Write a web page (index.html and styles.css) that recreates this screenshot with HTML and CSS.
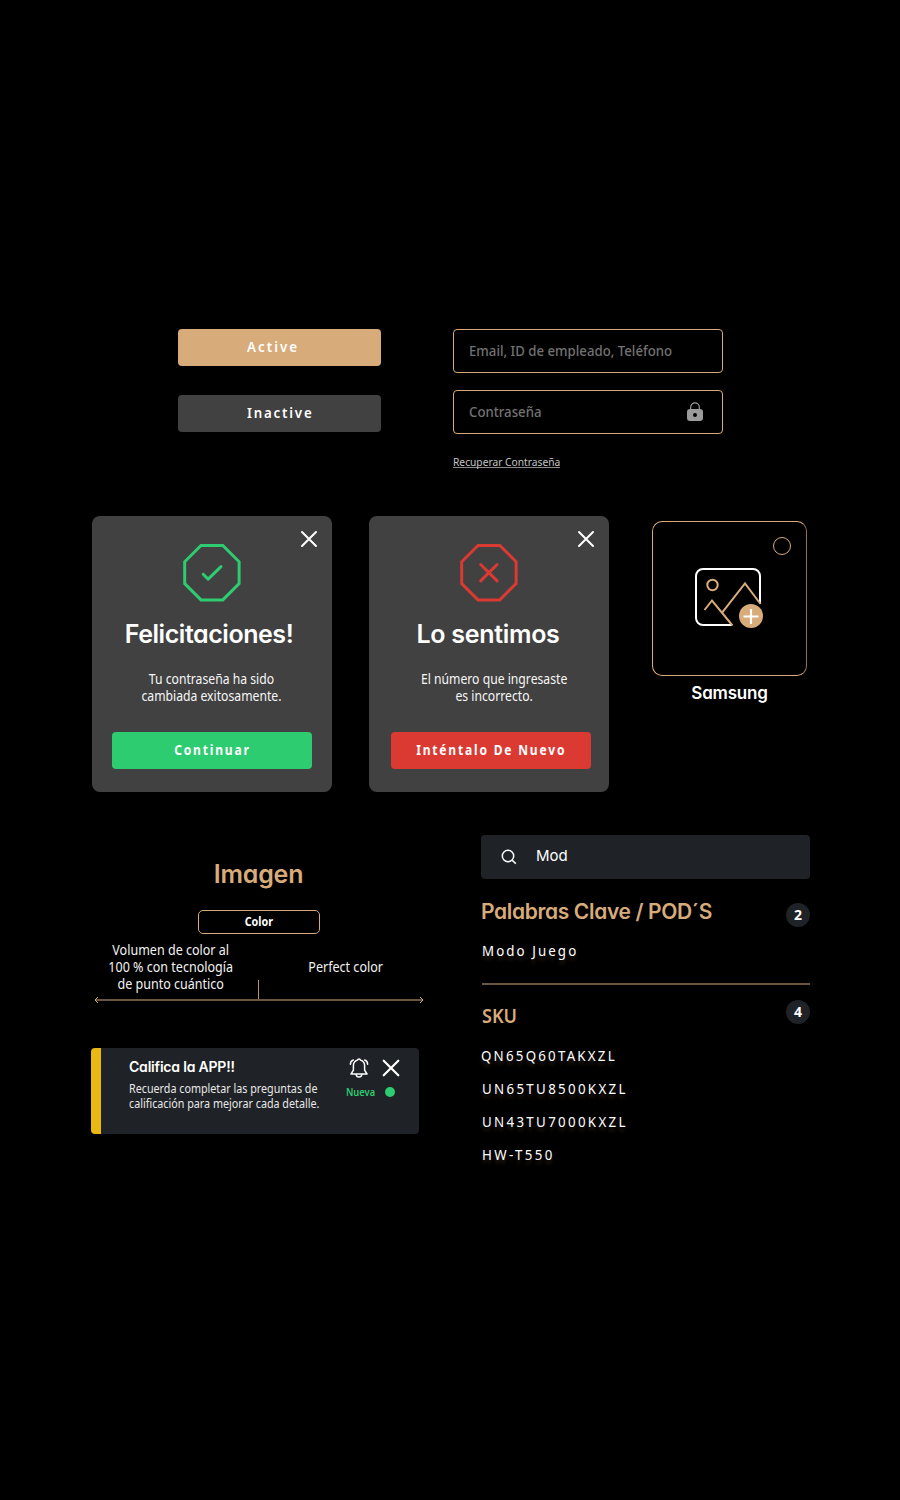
FILE: index.html
```html
<!DOCTYPE html>
<html lang="es">
<head>
<meta charset="utf-8">
<title>Componentes</title>
<link rel="stylesheet" href="styles.css">
</head>
<body>
<main class="page">
  <section class="controls">
    <div class="buttons">
      <button class="btn btn-active"><span class="txt">Active</span></button>
      <button class="btn btn-inactive"><span class="txt">Inactive</span></button>
    </div>
    <form class="form">
      <div class="field"><span class="txt">Email, ID de empleado, Teléfono</span></div>
      <div class="field">
        <span class="txt">Contraseña</span>
        <svg class="lock" width="16" height="20" viewBox="0 0 16 20">
          <path d="M3.7 8V5.2a4.3 4.3 0 0 1 8.6 0V8" fill="none" stroke="#9b9b9b" stroke-width="1.2"/>
          <path fill-rule="evenodd" fill="#9b9b9b" d="M3 7h10a3 3 0 0 1 3 3v6a3 3 0 0 1-3 3H3a3 3 0 0 1-3-3v-6a3 3 0 0 1 3-3zM8 11a2 2 0 1 0 0 4 2 2 0 0 0 0-4z"/>
        </svg>
      </div>
      <a class="link"><span class="txt">Recuperar Contraseña</span></a>
    </form>
  </section>

  <section class="cards">
    <article class="modal modal-ok">
      <svg class="close" width="18" height="18" viewBox="0 0 18 18"><path d="M2 2l14 14M16 2L2 16"/></svg>
      <svg class="octagon" width="58" height="58" viewBox="-0.2 0 58.6 58.6">
        <path d="M18 1.5h22L56.500 18v22L40 56.500H18L1.500 40V18z"/>
        <path class="mark" d="M20.200 30.500l5 5L38.200 22.900"/>
      </svg>
      <h2 class="title">Felicitaciones!</h2>
      <p class="message"><span class="txt">Tu contraseña ha sido<br>cambiada exitosamente.</span></p>
      <button class="action"><span class="txt">Continuar</span></button>
    </article>
    <article class="modal modal-error">
      <svg class="close" width="18" height="18" viewBox="0 0 18 18"><path d="M2 2l14 14M16 2L2 16"/></svg>
      <svg class="octagon" width="58" height="58" viewBox="-0.2 0 58.6 58.6">
        <path d="M18 1.500h22L56.500 18v22L40 56.500H18L1.500 40V18z"/>
        <path class="mark" d="M20.700 20.700l16.600 16.600M37.300 20.700L20.700 37.300"/>
      </svg>
      <h2 class="title">Lo sentimos</h2>
      <p class="message"><span class="txt">El número que ingresaste<br>es incorrecto.</span></p>
      <button class="action"><span class="txt">Inténtalo De Nuevo</span></button>
    </article>
    <figure class="gallery">
      <div class="tile">
        <span class="radio"></span>
        <svg class="picture" width="70" height="62" viewBox="0 0 70 62" fill="none">
          <path d="M38 57H9a7 7 0 0 1-7-7V8a7 7 0 0 1 7-7h50a7 7 0 0 1 7 7v27.500" stroke="#fff" stroke-width="2"/>
          <g stroke="#d8ab7b" stroke-width="2">
            <circle cx="18.500" cy="17" r="5.200"/>
            <path d="M10.500 42l7.500-9.500L38.500 57.500M28.500 44.200L51 15.500 66.500 36"/>
          </g>
          <circle cx="57" cy="48" r="12" fill="#d8ab7b"/>
          <path d="M49.500 48.500h15M57 41v15" stroke="#fff" stroke-width="2.200"/>
        </svg>
      </div>
      <figcaption class="caption">Samsung</figcaption>
    </figure>
  </section>

  <section class="lower">
    <div class="left">
      <div class="feature">
        <h2 class="feature-title">Imagen</h2>
        <div class="chip"><span class="txt">Color</span></div>
        <div class="compare">
          <p><span class="txt">Volumen de color al<br>100 % con tecnología<br>de punto cuántico</span></p>
          <p><span class="txt">Perfect color</span></p>
        </div>
        <svg class="axis" width="330" height="26" viewBox="0 0 330 26" fill="none" stroke="#d8ab7b">
          <path d="M164.500 0v20" stroke="#b8926a"/>
          <path d="M1 20h328" stroke-width="2" stroke="#6c563e"/>
          <path d="M4 17L1 20l3 3M326 17l3 3-3 3"/>
        </svg>
      </div>
      <article class="notice">
        <div class="notice-body">
          <h3 class="notice-title">Califica la APP!!</h3>
          <p class="notice-text"><span class="txt">Recuerda completar las preguntas de<br>calificación para mejorar cada detalle.</span></p>
        </div>
        <div class="notice-side">
          <div class="notice-icons">
            <svg width="20" height="20" viewBox="0 0 20 20" fill="none" stroke="#fff" stroke-width="1.500" stroke-linejoin="round" stroke-linecap="round">
              <path d="M10 1c.8 0 1.300.5 1.500 1.100 2.600.7 4.100 2.700 4.100 5.500v4.600l2.400 3.800H2l2.400-3.800V7.600c0-2.800 1.500-4.800 4.100-5.500C8.700 1.500 9.200 1 10 1z"/>
              <path d="M7.200 16.500c.2 1.700 1.300 2.600 2.800 2.600s2.600-.9 2.800-2.600M1.400 6.300c0-2.300 1.100-3.800 2.900-4.300M18.600 6.300c0-2.300-1.100-3.800-2.900-4.300"/>
            </svg>
            <svg class="dismiss" width="18" height="18" viewBox="0 0 18 18"><path d="M1.700 1.700l14.600 14.600M16.300 1.700L1.700 16.300"/></svg>
          </div>
          <div class="status"><span class="txt">Nueva</span><i class="dot"></i></div>
        </div>
      </article>
    </div>

    <div class="right">
      <div class="search">
        <svg width="18" height="18" viewBox="0 0 18 18" fill="none" stroke="#fff" stroke-width="1.500"><circle cx="8" cy="8" r="5.700"/><path d="M12.200 12.200l3.600 3.400"/></svg>
        <span class="query">Mod</span>
      </div>
      <div class="group">
        <h3 class="group-title">Palabras Clave / POD´S</h3>
        <span class="count">2</span>
      </div>
      <ul class="list">
        <li class="word"><span class="txt">Modo Juego</span></li>
      </ul>
      <hr class="rule">
      <div class="group group-sku">
        <h3 class="sku-title"><span class="txt">SKU</span></h3>
        <span class="count">4</span>
      </div>
      <ul class="list list-sku">
        <li class="first"><span class="txt">QN65Q60TAKXZL</span></li>
        <li><span class="txt">UN65TU8500KXZL</span></li>
        <li><span class="txt">UN43TU7000KXZL</span></li>
        <li class="last"><span class="txt">HW-T550</span></li>
      </ul>
    </div>
  </section>
</main>
</body>
</html>
```
FILE: styles.css
```css
* { box-sizing: border-box; margin: 0; padding: 0; }

body {
  background: #000;
  color: #fff;
  font-family: "Noto Sans", "Open Sans", sans-serif;
  font-size: 14px;
  line-height: 17px;
}

button { border: 0; font: inherit; color: inherit; }
ul { list-style: none; }

.page {
  width: 900px;
  height: 1500px;
  padding-top: 329px;
  overflow: hidden;
}

/* Condensed text run */
.txt {
  display: inline-block;
  white-space: nowrap;
  transform: scaleX(0.9);
  transform-origin: left center;
}

/* Buttons and fields */
.controls { display: flex; gap: 72px; height: 187px; padding-left: 178px; }
.buttons { display: flex; flex-direction: column; gap: 29px; width: 203px; }
.btn {
  height: 37px;
  padding: 0 0 2px 69px;
  border-radius: 4px;
  font-weight: 600;
  text-align: left;
}
.btn .txt { transform: scaleX(0.95); }
.btn-active { background: #d8ab7b; letter-spacing: 2.15px; }
.btn-inactive { background: #414141; letter-spacing: 1.9px; }

.form { display: flex; flex-direction: column; gap: 17px; width: 270px; }
.field {
  display: flex;
  align-items: center;
  justify-content: space-between;
  height: 44px;
  padding: 0 19px 0 15px;
  border: 1px solid #d8ab7b;
  border-radius: 4px;
  color: #727272;
  font-weight: 500;
}
.field .txt { margin-bottom: 2px; transform: scaleX(0.943); }
.lock { display: block; }
.link { margin-top: 2px; font-size: 11px; color: #c4c4c4; }
.link .txt {
  line-height: 11px;
  border-bottom: 1px solid #8a8a8a;
  transform: scaleX(0.93);
}

/* Modals */
.cards { display: flex; height: 319px; padding-left: 92px; }
.modal {
  position: relative;
  display: flex;
  flex-direction: column;
  align-items: center;
  width: 240px;
  height: 276px;
  margin-right: 37px;
  padding-top: 28px;
  border-radius: 8px;
  background: #414141;
}
.modal-ok { --tone: #2ecc71; }
.modal-error { --tone: #da3a32; margin-right: 43px; }
.close { position: absolute; top: 14px; right: 14px; stroke: #fff; stroke-width: 2; stroke-linecap: round; }
.octagon { fill: none; stroke: var(--tone); stroke-width: 3; }
.mark { stroke-linecap: round; stroke-linejoin: round; }
.title {
  margin-top: 17px;
  font: 600 25px/30px Inter, sans-serif;
  font-feature-settings: "cv11";
  white-space: nowrap;
}
.modal-ok .title { margin-right: 6px; letter-spacing: -0.45px; }
.modal-error .title { margin-right: 2px; letter-spacing: -0.3px; }
.message { margin-top: 21px; height: 34px; text-align: center; color: #f7f7f7; }
.message .txt { transform: scaleX(0.87); transform-origin: center; }
.modal-ok .message { margin-right: 1px; }
.modal-error .message { margin-left: 10px; }
.action {
  width: 200px;
  height: 37px;
  margin-top: 28px;
  padding-bottom: 2px;
  border-radius: 4px;
  background: var(--tone);
  font-weight: 700;
  letter-spacing: 2.1px;
  text-align: center;
}
.modal-error .action { margin-left: 4px; }
.action .txt { transform: scaleX(0.86); transform-origin: center; }

/* Gallery tile */
.gallery { width: 155px; padding-top: 5px; }
.tile {
  position: relative;
  height: 155px;
  padding: 46px 0 0 41px;
  border: 1px solid #d8ab7b;
  border-right-color: #8f7152;
  border-radius: 10px;
}
.radio {
  position: absolute;
  top: 15px;
  right: 15px;
  width: 18px;
  height: 18px;
  border: 1px solid #d8ab7b;
  border-radius: 50%;
}
.picture { display: block; }
.caption {
  margin-top: 7px;
  text-align: center;
  font: 600 17px/20px Inter, sans-serif;
  font-feature-settings: "cv11";
  letter-spacing: -0.2px;
}

/* Feature comparison */
.lower { display: flex; gap: 57px; padding-left: 91px; }
.left { width: 333px; padding-top: 24px; }
.feature { display: flex; flex-direction: column; align-items: center; height: 189px; }
.feature-title {
  margin-left: 2px;
  font: 600 25px/30px Inter, sans-serif;
  font-feature-settings: "cv11";
  letter-spacing: -0.2px;
  color: #d8ab7b;
}
.chip {
  width: 122px;
  height: 24px;
  margin: 21px 0 0 3px;
  border: 1px solid #d8ab7b;
  border-radius: 5px;
  font-size: 12px;
  font-weight: 700;
  line-height: 22px;
  text-align: center;
}
.chip .txt, .compare .txt { transform: scaleX(0.895); transform-origin: center; }
.compare {
  display: grid;
  grid-template-columns: 160px 190px;
  align-items: center;
  height: 51px;
  margin: 7px 0 0 17px;
  text-align: center;
  color: #f2f2f2;
}
.axis { flex: none; margin: -12px 0 0 3px; }

/* Notification */
.notice {
  display: flex;
  width: 328px;
  height: 86px;
  border-left: 10px solid #e9b812;
  border-radius: 4px;
  background: #1f2226;
}
.notice-body { width: 245px; padding: 10px 0 0 28px; }
.notice-title {
  font: 600 14px/18px Inter, sans-serif;
  font-feature-settings: "cv11";
  letter-spacing: -0.2px;
  white-space: nowrap;
}
.notice-text { margin-top: 5px; font-size: 12px; line-height: 15px; color: #e8e8e8; }
.notice-text .txt { transform: scaleX(0.895); }
.notice-side { padding-top: 10px; }
.notice-icons { display: flex; gap: 13px; margin-left: 3px; }
.dismiss { margin-top: 1px; stroke: #fff; stroke-width: 2.2; stroke-linecap: round; }
.status {
  display: flex;
  align-items: center;
  gap: 8px;
  height: 10px;
  margin-top: 9px;
  font-size: 10px;
  font-weight: 600;
  color: #2ecc71;
}
.status .txt { transform: scaleX(0.93); }
.dot { width: 10px; height: 10px; border-radius: 50%; background: #2ecc71; }

/* Search results */
.right { width: 329px; }
.search {
  display: flex;
  align-items: center;
  height: 44px;
  padding-left: 19px;
  border-radius: 4px;
  background: #1f2226;
}
.query {
  margin: -3px 0 0 18px;
  font: 400 15px/18px Inter, sans-serif;
  font-feature-settings: "cv11";
}
.group { display: flex; align-items: center; justify-content: space-between; height: 24px; margin-top: 24px; }
.group-title {
  margin-top: -6px;
  font: 600 21px/26px Inter, sans-serif;
  font-feature-settings: "cv11";
  letter-spacing: -0.35px;
  color: #d8ab7b;
}
.count {
  width: 24px;
  height: 24px;
  border-radius: 50%;
  background: #1f2226;
  font-weight: 700;
  line-height: 24px;
  text-align: center;
}
.list {
  padding: 15px 0 0 1px;
  letter-spacing: 2.45px;
  text-shadow: 0 4px 4px rgba(216, 171, 123, 0.2);
}
.list .txt { transform: scaleX(0.95); }
.word { letter-spacing: 2.2px; }
.rule { height: 2px; margin: 24px 0 0 1px; border: 0; background: #6c563e; }
.group-sku { margin-top: 15px; }
.sku-title { margin: 7px 0 0 1px; font-size: 20px; font-weight: 600; line-height: 24px; color: #d8ab7b; }
.sku-title .txt { transform: scaleX(0.9); }
.list-sku { display: flex; flex-direction: column; gap: 16px; padding-top: 23px; }
.first { margin-left: -1px; letter-spacing: 2.35px; }
.last { letter-spacing: 2.5px; }
```
